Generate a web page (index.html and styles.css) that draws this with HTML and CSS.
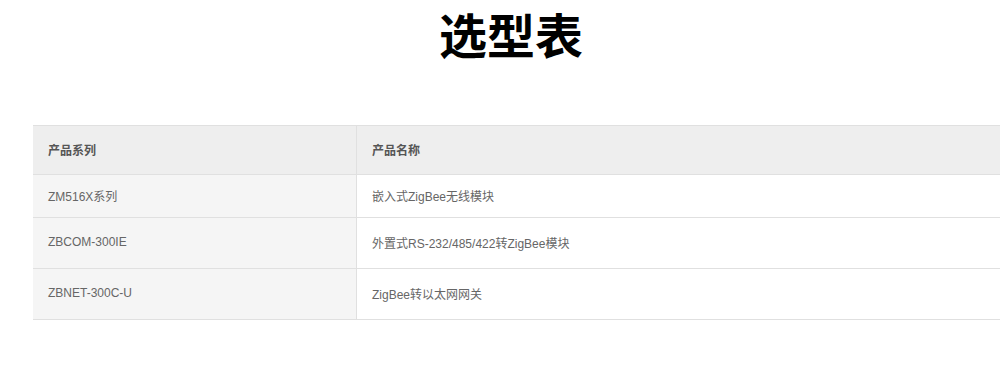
FILE: index.html
```html
<!DOCTYPE html>
<html lang="zh-CN">
<head>
<meta charset="utf-8">
<title>选型表</title>
<link rel="stylesheet" href="styles.css">
</head>
<body>
<div class="page">
  <h1 class="title">选型表</h1>
  <div class="table-wrap">
    <table class="spec">
      <thead>
        <tr class="head-row">
          <th class="col-series">产品系列</th>
          <th class="col-name">产品名称</th>
        </tr>
      </thead>
      <tbody>
        <tr class="row row-short">
          <td class="col-series">ZM516X系列</td>
          <td class="col-name">嵌入式ZigBee无线模块</td>
        </tr>
        <tr class="row">
          <td class="col-series">ZBCOM-300IE</td>
          <td class="col-name">外置式RS-232/485/422转ZigBee模块</td>
        </tr>
        <tr class="row">
          <td class="col-series">ZBNET-300C-U</td>
          <td class="col-name">ZigBee转以太网网关</td>
        </tr>
      </tbody>
    </table>
  </div>
</div>
</body>
</html>
```

FILE: styles.css
```css
html, body {
  margin: 0;
  padding: 0;
  overflow: hidden;
  background: #fff;
}

.page {
  font-family: "Liberation Sans", "Noto Sans CJK SC", sans-serif;
  width: 1000px;
}

.title {
  margin: 5px 0 0 22px;
  font-family: "Noto Sans CJK SC", sans-serif;
  font-size: 48px;
  font-weight: 700;
  line-height: 56px;
  text-align: center;
  color: #000;
}

.table-wrap {
  margin: 64px 0 0 33px;
  width: 967px;
}

.spec {
  width: 100%;
  border-collapse: collapse;
  font-size: 12px;
}

.spec th,
.spec td {
  text-align: left;
  padding: 0 15px;
  border-top: 1px solid #e0e0e0;
  border-bottom: 1px solid #e0e0e0;
}

.spec .col-series {
  width: 293px;
  border-right: 1px solid #e0e0e0;
}

.head-row th {
  height: 46px;
  padding-bottom: 2px;
  background: #eeeeee;
  color: #555;
  font-weight: 700;
}

.row td {
  height: 48px;
  padding-bottom: 2px;
  color: #666;
}

.row.row-short td {
  height: 40px;
  padding-bottom: 2px;
}

.row .col-series {
  background: #f5f5f5;
}

.row .col-name {
  background: #fff;
}
```
